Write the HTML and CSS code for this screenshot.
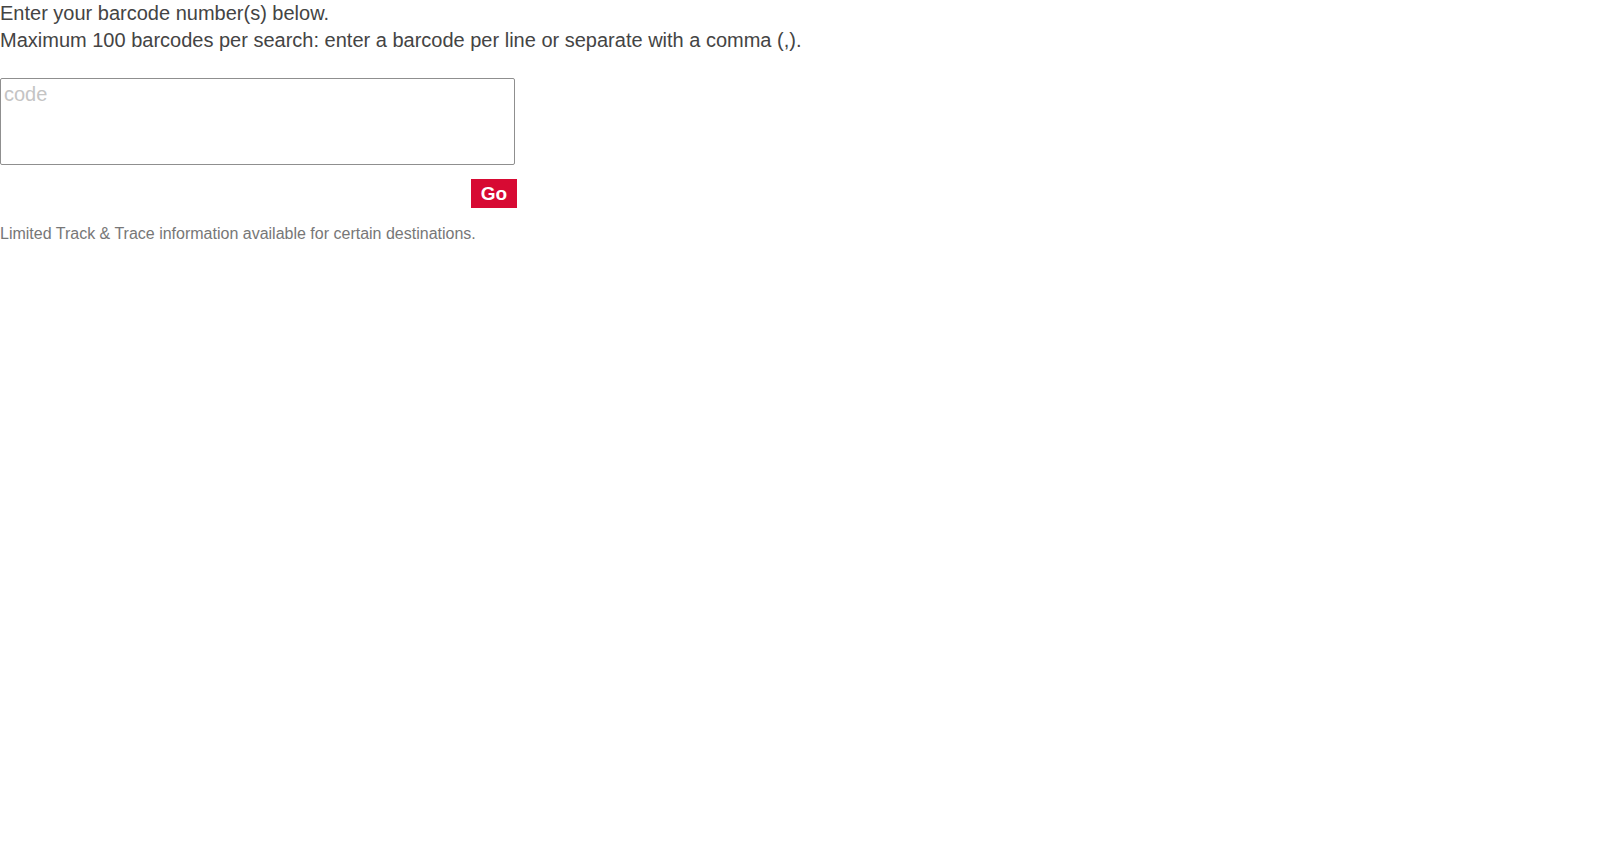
FILE: index.html
```html
<!DOCTYPE html>
<html lang="en">
<head>
<meta charset="utf-8">
<title>Track &amp; Trace</title>
<link rel="stylesheet" href="styles.css">
</head>
<body>
<div class="page">
  <p class="intro">Enter your barcode number(s) below.<br>Maximum 100 barcodes per search: enter a barcode per line or separate with a comma (,).</p>
  <form class="search">
    <textarea class="codes" placeholder="code"></textarea>
    <button type="button" class="go">Go</button>
  </form>
  <p class="note">Limited Track &amp; Trace information available for certain destinations.</p>
</div>
</body>
</html>
```

FILE: styles.css
```css
html, body {
  margin: 0;
  padding: 0;
  background: #fff;
}
body {
  font-family: "Liberation Sans", Arial, sans-serif;
  color: #444;
}
.page {
  display: flex;
  flex-direction: column;
}
.intro {
  margin: 0 0 24px 0;
  font-size: 20px;
  line-height: 27px;
}
.search {
  width: 517px;
  display: flex;
  flex-direction: column;
}
.codes {
  box-sizing: border-box;
  width: 515px;
  height: 87px;
  margin: 0;
  padding: 4px 3px;
  border: 1px solid #8f8f8f;
  border-radius: 2px;
  font-family: "Liberation Sans", Arial, sans-serif;
  font-size: 20px;
  color: #444;
  resize: none;
  outline: none;
}
.codes::placeholder {
  color: #c4c4c4;
}
.go {
  align-self: flex-end;
  margin-top: 14px;
  width: 46px;
  height: 29px;
  padding: 0;
  border: none;
  background: #d70a33;
  color: #fff;
  font-family: "Liberation Sans", Arial, sans-serif;
  font-weight: bold;
  font-size: 19px;
}
.note {
  margin: 16px 0 0 0;
  font-size: 16px;
  line-height: 20px;
  color: #777;
}
```
